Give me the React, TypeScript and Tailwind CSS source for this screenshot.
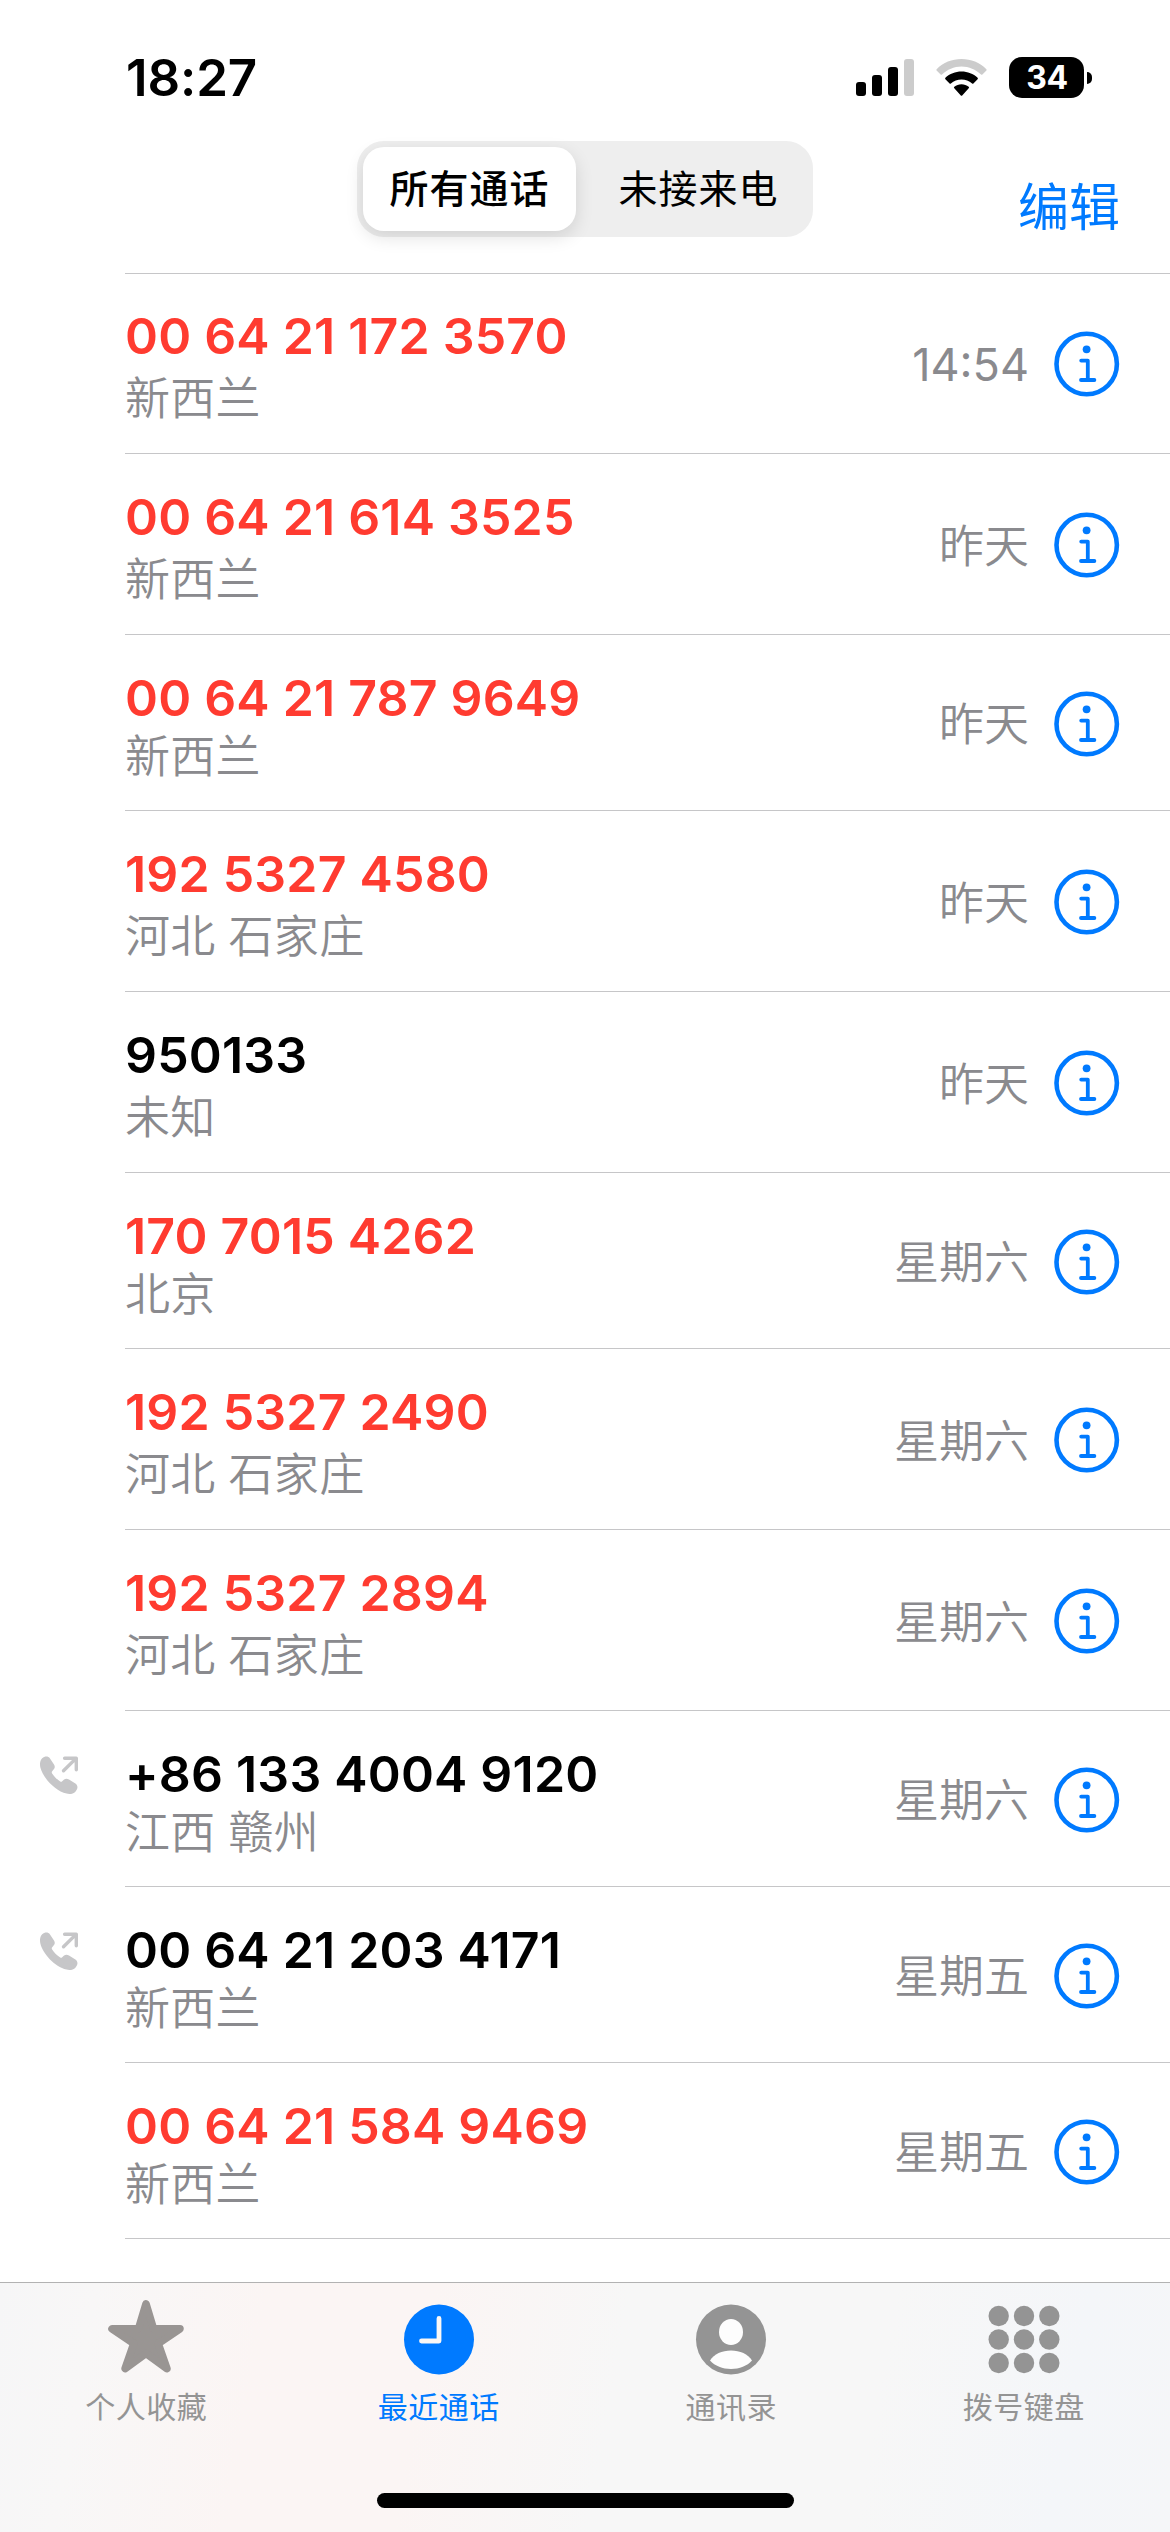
import type { ReactNode } from "react";

interface Call {
    number: string;
    place: string;
    time: string;
    missed?: boolean;
    outgoing?: boolean;
    compact?: boolean;
}

const calls: Call[] = [
    { number: "00 64 21 172 3570", place: "新西兰", time: "14:54", missed: true },
    { number: "00 64 21 614 3525", place: "新西兰", time: "昨天", missed: true },
    { number: "00 64 21 787 9649", place: "新西兰", time: "昨天", missed: true, compact: true },
    { number: "192 5327 4580", place: "河北 石家庄", time: "昨天", missed: true },
    { number: "950133", place: "未知", time: "昨天" },
    { number: "170 7015 4262", place: "北京", time: "星期六", missed: true, compact: true },
    { number: "192 5327 2490", place: "河北 石家庄", time: "星期六", missed: true },
    { number: "192 5327 2894", place: "河北 石家庄", time: "星期六", missed: true },
    { number: "+86 133 4004 9120", place: "江西 赣州", time: "星期六", outgoing: true, compact: true },
    { number: "00 64 21 203 4171", place: "新西兰", time: "星期五", outgoing: true, compact: true },
    { number: "00 64 21 584 9469", place: "新西兰", time: "星期五", missed: true, compact: true },
];

function InfoIcon() {
    return (
        <svg className="h-[66px] w-[66px] shrink-0" viewBox="0 0 66 66" fill="none" stroke="#007aff">
            <circle cx="32.7" cy="33" r="30.2" strokeWidth="4.6" />
            <circle cx="32.6" cy="18.3" r="3.9" fill="#007aff" stroke="none" />
            <path d="M27.2 29.6h6.6v19.4M27 49h13.4" strokeWidth="3.8" strokeLinecap="round" strokeLinejoin="round" />
        </svg>
    );
}

function OutgoingIcon() {
    return (
        <svg className="h-[38px] w-[39px]" viewBox="0 0 39 38" fill="#c6c6c8">
            <path d="M3.2 2.2C5.6 0 9.2-.2 11 2.4L15 8.6C16.2 10.4 16 12 14.6 13.6L13.2 15.2C12.6 16 12.6 16.6 13.1 17.4C15.2 20.6 18 23.4 21.2 25.4C22 25.9 22.6 25.8 23.2 25.2L24.8 23.8C26.4 22.4 28.2 22.4 30 23.6L36.4 27.6C39.2 29.6 39 33 36.6 35.4C34.2 37.8 31 38.4 27.6 37.6C15.6 34.8 3.6 21.2 1.3 11.2C.6 8 1 4.4 3.2 2.2Z" />
            <path d="M24.5 14.8 36 3.4M25.6 2.2h11.7v11.6" fill="none" stroke="#c6c6c8" strokeWidth="3.4" strokeLinecap="round" strokeLinejoin="round" />
        </svg>
    );
}

function StatusBar() {
    return (
        <div className="flex h-[141px] items-start justify-between pl-[126px] pr-[78px]">
            <span className="mt-[48px] text-[51px] font-semibold leading-[60px] tracking-[-0.1px]">18:27</span>
            <div className="mt-[57px] flex items-center">
                <svg className="h-[41px] w-[59px]" viewBox="0 0 59 41">
                    <rect x="1" y="25" width="10" height="14" rx="3" />
                    <rect x="17" y="18" width="10" height="21" rx="3" />
                    <rect x="33" y="10" width="10" height="29" rx="3" />
                    <rect x="49" y="2" width="10" height="37" rx="3" fill="#cccccc" />
                </svg>
                <svg className="ml-[22px] h-[41px] w-[51px]" viewBox="0 0 51 41">
                    <path d="M25.5 2C35 2 43.8 5.6 50.4 12.2a1 1 0 0 1 0 1.3l-4 4a1 1 0 0 1-1.4 0C39.8 12.5 33 9.5 25.5 9.5S11.2 12.5 6 17.5a1 1 0 0 1-1.4 0l-4-4a1 1 0 0 1 0-1.3C7.2 5.6 16 2 25.5 2Z" fill="#cccccc" />
                    <path d="M25.5 14.6c6.2 0 11.8 2.3 16.1 6.2a1 1 0 0 1 0 1.4l-4.2 4.2a1 1 0 0 1-1.3 0c-2.9-2.5-6.6-4-10.6-4s-7.7 1.5-10.6 4a1 1 0 0 1-1.3 0l-4.2-4.2a1 1 0 0 1 0-1.4c4.3-3.9 9.9-6.2 16.1-6.2Z" />
                    <path d="M25.5 27.2c2.7 0 5.2 1 7.2 2.6a1 1 0 0 1 0 1.5l-6.5 7.2a1 1 0 0 1-1.4 0l-6.5-7.2a1 1 0 0 1 0-1.5c2-1.600 4.500-2.600 7.200-2.600Z" />
                </svg>
                <div className="ml-[22px] flex h-[41px] w-[75px] items-center justify-center rounded-[13px] bg-black pl-px text-[32px] font-bold tracking-[-0.3px] text-white">34</div>
                <div className="ml-[3px] h-[12px] w-[5px] rounded-r-full bg-black" />
            </div>
        </div>
    );
}

function Header() {
    return (
        <header className="grid h-[132px] grid-cols-[1fr_456px_1fr] items-start">
            <div />
            <div className="flex h-[96px] rounded-[27px] bg-[#eeeeee] p-[6px] text-[39px] tracking-[1px]">
                <button className="h-[84px] w-[213px] rounded-[21px] bg-white font-medium shadow-[0_6px_18px_rgba(0,0,0,0.12)]">所有通话</button>
                <button className="h-[84px] flex-1 pl-[14px]">未接来电</button>
            </div>
            <button className="mt-[34px] justify-self-end pr-[50px] text-[51px] leading-[66px] text-[#007aff]">编辑</button>
        </header>
    );
}

function CallRow({ call }: { call: Call }) {
    return (
        <li className={call.compact ? "group flex h-[176px]" : "group flex h-[181px] first:h-[180px]"}>
            <div className="w-[125px] shrink-0 pl-[39px] pt-[45px]">
                {call.outgoing && <OutgoingIcon />}
            </div>
            <div className="flex flex-1 border-b border-[#c6c6c8]">
                <div className="flex-1 pt-[33px] group-first:pt-[32px]">
                    <div className={call.missed ? "text-[50px] font-semibold leading-[60px] tracking-[0.2px] text-[#ff3b30]" : "text-[50px] font-semibold leading-[60px] tracking-[0.2px]"}>
                        {call.number}
                    </div>
                    <div className={call.compact ? "-mt-px text-[45px] font-[350] leading-[60px] tracking-[0.3px] text-[#8a8a8e]" : "mt-[3px] text-[45px] font-[350] leading-[60px] tracking-[0.3px] text-[#8a8a8e]"}>
                        {call.place}
                    </div>
                </div>
                <div className="flex items-center pr-[50px] pt-[2px] group-first:pt-0">
                    <span className="mr-[25px] pt-[3px] text-[45px] font-[350] text-[#8a8a8e] group-first:font-normal">{call.time}</span>
                    <InfoIcon />
                </div>
            </div>
        </li>
    );
}

function Tab({ label, active, children }: { label: string; active?: boolean; children: ReactNode }) {
    return (
        <button className={active ? "flex flex-1 flex-col items-center text-[#007aff]" : "flex flex-1 flex-col items-center text-[#949494]"}>
            <svg className="mt-[16px] h-[78px] w-[78px]" viewBox="0 0 78 78" fill="currentColor">
                {children}
            </svg>
            <span className="mt-[12px] text-[30px] leading-[36px] tracking-[0.5px]">{label}</span>
        </button>
    );
}

function TabBar() {
    return (
        <nav className="flex flex-1 flex-col border-t border-[#b2b2b2] bg-[linear-gradient(100deg,#f6f6f7_0%,#f8f7f7_8%,#fbf5f4_22%,#fbf5f4_36%,#f7f7f7_52%,#f7f7f7_74%,#f4f6f9_90%,#f5f6f8_100%)]">
            <div className="flex h-[210px]">
                <Tab label="个人收藏">
                    <path
                        d="M39 4.8 46.5 29.8H73L51.2 44.6 59.9 69.6 39 54.4 18.1 69.6 26.8 44.6 5 29.8H31.5Z"
                        fill="#999593"
                        stroke="#999593"
                        strokeWidth="7.6"
                        strokeLinejoin="round"
                    />
                </Tab>
                <Tab label="最近通话" active>
                    <circle cx="39" cy="40.5" r="35" />
                    <path d="M39 19.5v22.5H21.5" fill="none" stroke="#faf7f6" strokeWidth="4.8" strokeLinecap="round" strokeLinejoin="round" />
                </Tab>
                <Tab label="通讯录">
                    <circle cx="39" cy="40.5" r="35" />
                    <ellipse cx="39" cy="33" rx="12" ry="13" fill="#fdfdfd" />
                    <path d="M18 61.5C22 55 30 51.5 39 51.5S56 55 60 61.5C55 67 47.5 70 39 70S23 67 18 61.5Z" fill="#fdfdfd" />
                </Tab>
                <Tab label="拨号键盘">
                    {[17, 40.5, 64].map((y) =>
                        [13.7, 39, 64.3].map((x) => <circle key={`${x}-${y}`} cx={x} cy={y} r="10.2" />)
                    )}
                </Tab>
            </div>
            <div className="mx-auto h-[15px] w-[417px] rounded-full bg-black" />
        </nav>
    );
}

export default function App() {
    return (
        <div className="flex h-[2532px] w-[1170px] flex-col overflow-hidden bg-white font-[Inter,'Noto_Sans_CJK_SC',sans-serif] text-black">
            <StatusBar />
            <Header />
            <div className="ml-[125px] h-px bg-[#c6c6c8]" />
            <ul className="h-[2008px]">
                {calls.map((call) => (
                    <CallRow key={call.number} call={call} />
                ))}
            </ul>
            <TabBar />
        </div>
    );
}
